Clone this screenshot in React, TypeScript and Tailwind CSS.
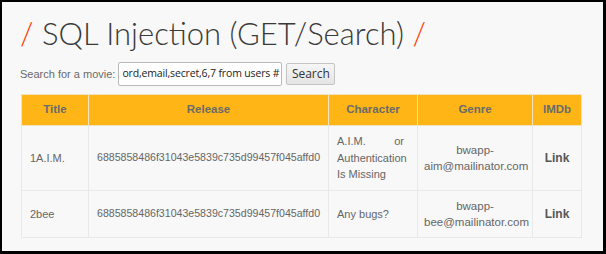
const rows = [
  {
    title: '1A.I.M.',
    release: '6885858486f31043e5839c735d99457f045affd0',
    character: 'A.I.M. or Authentication Is Missing',
    genre: ['bwapp-', 'aim@mailinator.com'],
    h: 'h-[65px]',
  },
  {
    title: '2bee',
    release: '6885858486f31043e5839c735d99457f045affd0',
    character: 'Any bugs?',
    genre: ['bwapp-', 'bee@mailinator.com'],
    h: 'h-[47px]',
  },
];

export default function App() {
  return (
    <div className="w-[606px] h-[254px] border-l-2 border-t-2 border-r-[3px] border-b-[3px] border-black bg-[#f8f8f8] pl-[18px] pt-[11px] font-['Liberation_Sans',Arial,sans-serif] overflow-hidden">
      <h1 className="h-[40px] text-[31px] leading-[40px] font-light text-[#3a3a3a] font-['Lato',sans-serif] whitespace-nowrap">
        <span className="text-[#ff3c00]">/</span> SQL Injection (GET/Search) <span className="text-[#ff3c00]">/</span>
      </h1>

      <div className="mt-[9px] flex items-center h-[24px]">
        <span className="text-[11px] text-[#6a6a6a]">Search for a movie:</span>
        <div className="ml-[3px] w-[164px] h-[24px] border border-[#b9b9b9] bg-white rounded-[2px] flex items-center overflow-hidden pl-[3px]">
          <span className="whitespace-nowrap text-[10.5px] text-[#222] font-['Open_Sans',sans-serif] tracking-[-0.15px]">
            ord,email,secret,6,7 from users #
          </span>
        </div>
        <button className="ml-[4px] w-[49px] h-[22px] border border-[#c4c4c4] rounded-[2px] bg-gradient-to-b from-[#f6f6f6] to-[#e4e4e4] text-[12px] text-[#333] font-['Open_Sans',sans-serif]">
          Search
        </button>
      </div>

      <table className="mt-[8px] ml-px w-[560px] border-collapse table-fixed text-[11px] text-[#666]">
        <colgroup>
          <col className="w-[67px]" />
          <col className="w-[240px]" />
          <col className="w-[89px]" />
          <col className="w-[115px]" />
          <col className="w-[49px]" />
        </colgroup>
        <thead>
          <tr className="h-[31px] bg-[#ffb515] text-[#6b6b6b] text-[11.5px]">
            <th className="border border-[#f2e3c0] font-bold">Title</th>
            <th className="border border-[#f2e3c0] font-bold">Release</th>
            <th className="border border-[#f2e3c0] font-bold">Character</th>
            <th className="border border-[#f2e3c0] font-bold">Genre</th>
            <th className="border border-[#f2e3c0] font-bold">IMDb</th>
          </tr>
        </thead>
        <tbody>
          {rows.map((r) => (
            <tr key={r.title} className={r.h}>
              <td className="border border-[#e9e9e9] px-[8px]">{r.title}</td>
              <td className="border border-[#e9e9e9] px-[8px] text-[10.6px] whitespace-nowrap">{r.release}</td>
              <td className="border border-[#e9e9e9] pl-[8px] pr-[13px] leading-[16.5px] text-justify">{r.character}</td>
              <td className="border border-[#e9e9e9] px-[6px] text-center leading-[16px] text-[11.5px]">
                {r.genre[0]}
                <br />
                {r.genre[1]}
              </td>
              <td className="border border-[#e9e9e9] text-center font-bold text-[#555] text-[12px]">Link</td>
            </tr>
          ))}
        </tbody>
      </table>
    </div>
  );
}
